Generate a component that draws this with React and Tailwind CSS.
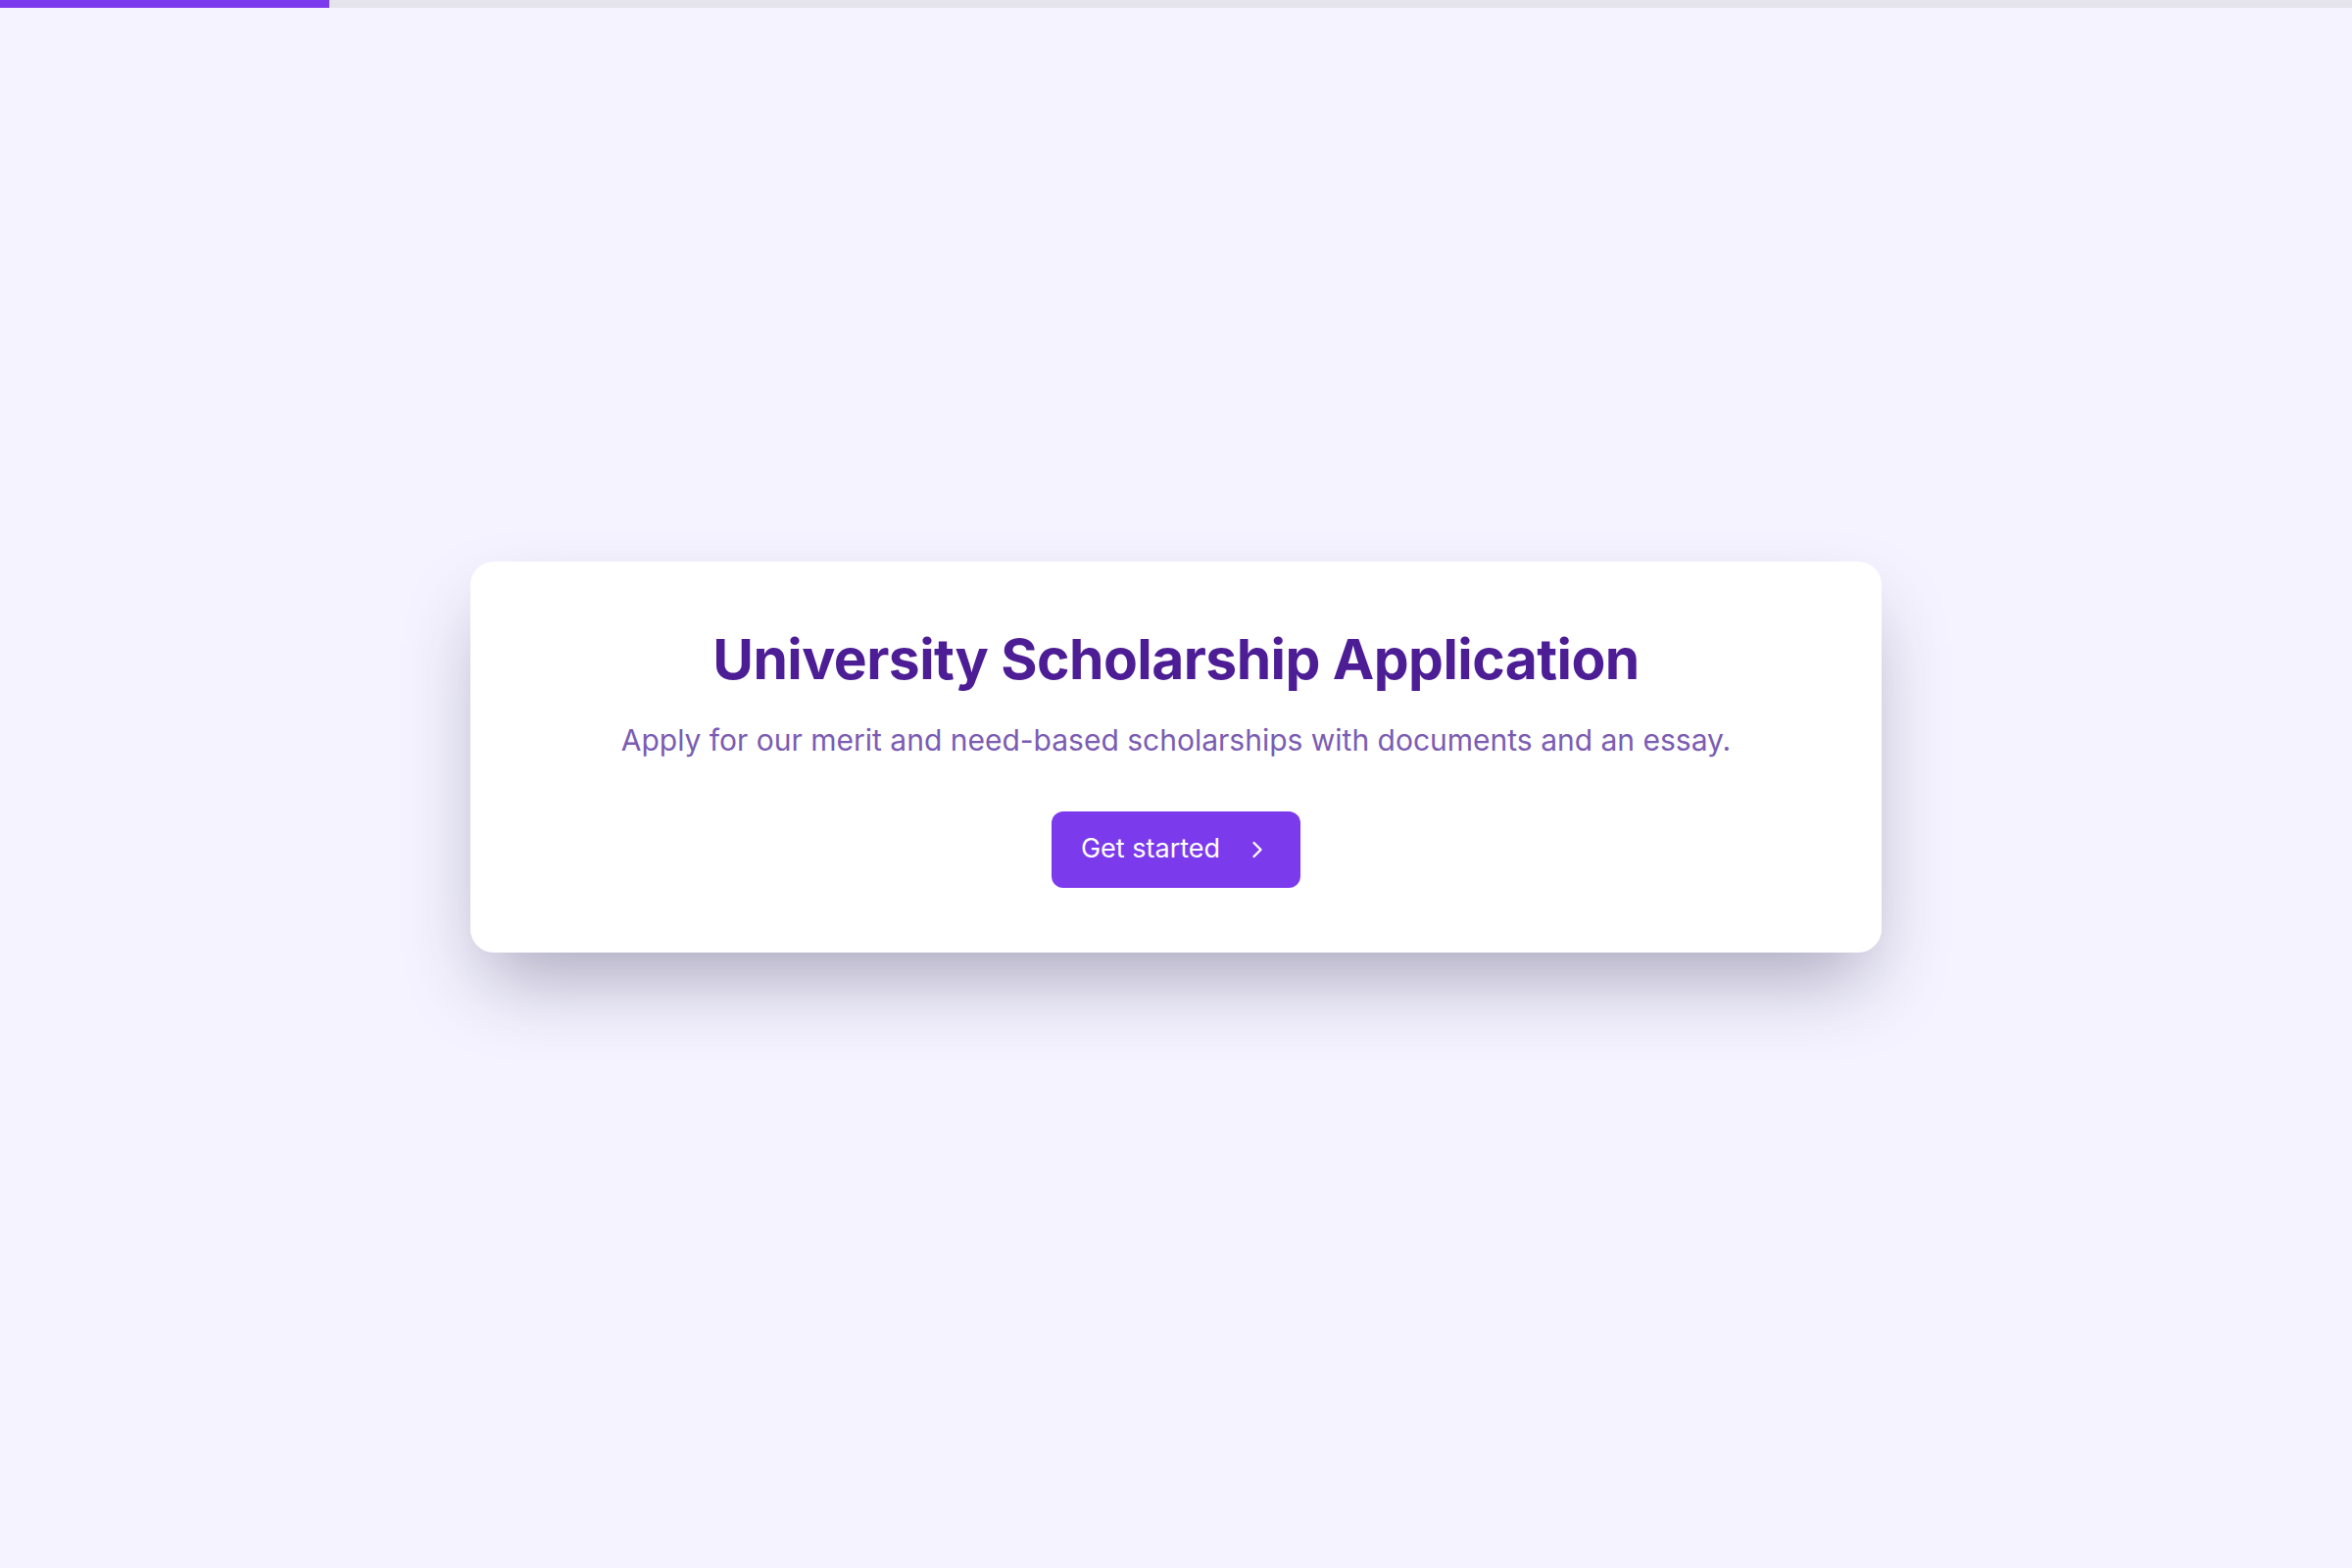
import { ChevronRight } from 'lucide-react';

export default function App() {
  return (
    <div className="min-h-screen bg-[#f5f3ff] font-['Inter','Noto_Sans',sans-serif]">
      <div className="h-2 w-full bg-[#e5e4ec]">
        <div className="h-full w-[14%] bg-[#7c3aed]" />
      </div>

      <main className="flex min-h-[1592px] items-center justify-center pb-[64px]">
        <section className="w-[1440px] rounded-3xl bg-white px-16 pt-16 pb-[66px] text-center shadow-[0_40px_80px_-16px_rgba(45,40,80,0.38)]">
          <h1 className="text-[57px] font-bold leading-[72px] tracking-[-0.01em] text-[#4c1d95]">
            University Scholarship Application
          </h1>
          <p className="mt-6 text-[30px] leading-[45px] text-[#7b5cb3]">
            Apply for our merit and need-based scholarships with documents and an essay.
          </p>
          <button className="mt-[50px] inline-flex h-[78px] items-center gap-6 rounded-xl bg-[#7c3aed] px-[30px] text-[27px] text-white">
            Get started
            <ChevronRight className="h-7 w-7" strokeWidth={2} />
          </button>
        </section>
      </main>
    </div>
  );
}
